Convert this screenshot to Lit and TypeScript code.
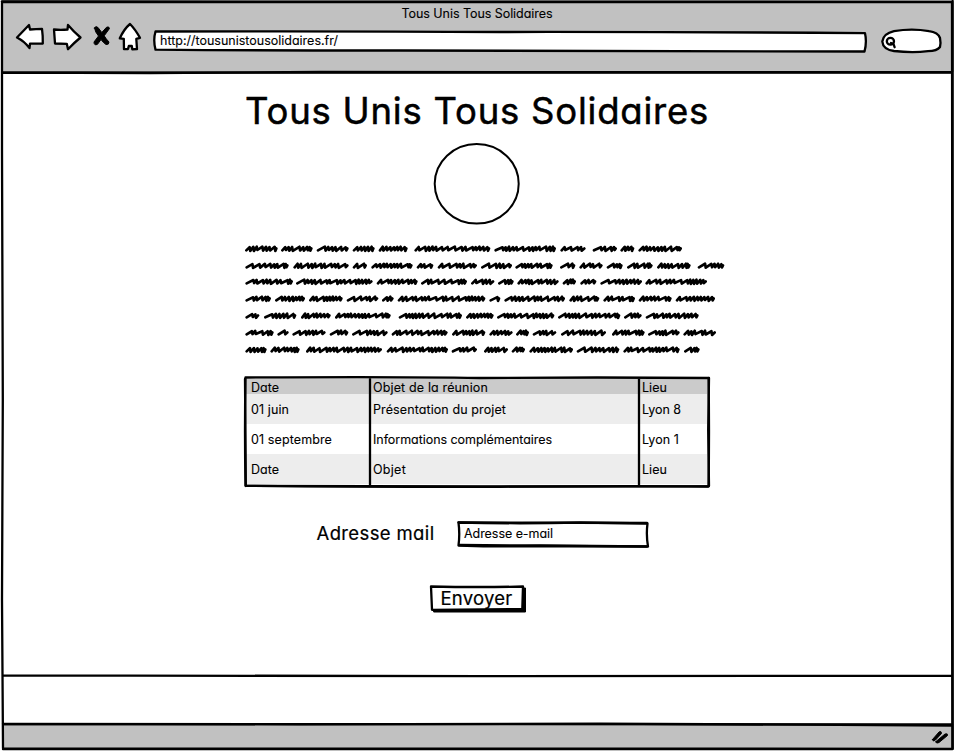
import { LitElement, html, svg, css } from "lit";
import { customElement, property } from "lit/decorators.js";

/** Hand-lettered label whose tracking is adjusted to fill `span` pixels. */
@customElement("sketch-label")
class SketchLabel extends LitElement {
  @property() text = "";
  @property({ type: Number }) span = 100;

  static styles = css`
    :host { display: block; white-space: nowrap; }
    .t { display: inline-block; -webkit-text-stroke: var(--ink, 0.1px) #000; }
  `;

  updated() {
    const el = this.renderRoot.querySelector<HTMLElement>(".t")!;
    el.style.letterSpacing = "0px";
    const natural = el.getBoundingClientRect().width;
    el.style.letterSpacing = `${(this.span - natural) / this.text.length}px`;
  }

  render() {
    return html`<span class="t">${this.text}</span>`;
  }
}

/** Paragraph of scribbled filler. Pairs are word start/end in thirds of a pixel. */
const SCRIBBLES: number[][] = [
  [17,112,125,217,232,325,340,403,418,502,525,750,765,947,963,1036,1060,1130,1143,1182,1197,1325],
  [18,145,162,325,340,380,396,517,532,579,595,710,725,815,828,937,962,1005,1020,1087,1102,1147,1163,1237,1253,1351,1375,1452],
  [18,158,170,397,412,532,545,680,695,762,776,820,834,955,970,1007,1023,1068,1083,1205,1218,1400],
  [18,92,107,194,209,307,322,414,428,460,475,735,750,780,795,974,990,1077,1092,1184,1198,1294,1309,1424],
  [18,57,74,168,185,271,287,451,478,665,680,760,773,942,956,1140,1154,1204,1219,1375],
  [18,100,114,145,159,256,271,324,338,442,457,622,638,735,750,817,830,866,880,948,965,1097,1118,1213,1226,1318,1332,1427],
  [18,79,93,178,200,425,442,623,637,710,734,803,817,854,870,998,1012,1137,1152,1318,1334,1378],
];
const ROW_Y = [41, 92, 140, 191, 242, 293, 344];

function scribble(x0: number, x1: number, y: number, seed: number): string {
  let s = seed * 7919 + 13;
  const rnd = () => ((s = (s * 1103515245 + 12345) & 0x7fffffff) >> 8) % 1000 / 1000;
  let x = x0 + 2;
  let d = `M${x} ${y + 5}`;
  while (x < x1 - 12) {
    const long = rnd() < 0.4;
    const step = long ? 16 + rnd() * 6 : 9 + rnd() * 3;
    const nx = Math.min(x + step, x1 - 7);
    d += `L${(nx - 1).toFixed(1)} ${(y - 4 - rnd() * 2).toFixed(1)}L${(nx + 1).toFixed(1)} ${(y + 4 + rnd() * 3).toFixed(1)}`;
    x = nx;
  }
  return d + `L${x1 - 3} ${y - 0.5}`;
}

const ROWS = [
  { tone: "head", cells: [["Date", 28], ["Objet de la réunion", 115], ["Lieu", 25]] },
  { tone: "odd", cells: [["01 juin", 38], ["Présentation du projet", 133], ["Lyon 8", 39]] },
  { tone: "even", cells: [["01 septembre", 81], ["Informations complémentaires", 179], ["Lyon 1", 37]] },
  { tone: "odd", cells: [["Date", 28], ["Objet", 33], ["Lieu", 25]] },
] as { tone: string; cells: [string, number][] }[];

@customElement("app-root")
class AppRoot extends LitElement {
  static styles = css`
    :host {
      display: block; color: #000;
      font: 12.5px/16px Inter, "Open Sans", sans-serif;
      font-feature-settings: "cv11" 1, "calt" 0;
    }
    .window {
      position: relative; box-sizing: border-box; width: 954px; height: 751px;
      display: grid; grid-template-rows: 72px 603px 49px 26px;
      background: #fff; overflow: hidden;
    }
    .frame { position: absolute; inset: 0; width: 100%; height: 100%; overflow: visible; pointer-events: none; }
    svg { display: block; fill: none; stroke: #000; stroke-width: 2.3; stroke-linejoin: round; stroke-linecap: round; }
    .bar { background: #c1c1c1; margin: 0 2px; }
    .title { display: flex; justify-content: center; padding: 6px 2px 0 0; height: 15px; }
    .tools { display: flex; height: 34px; margin-left: -2px; }
    .nav { flex: 0 0 152px; }
    .address { flex: 0 0 716px; position: relative; box-sizing: border-box; padding: 12px 0 0 8px; }
    .address sketch-label, .input sketch-label, .button sketch-label { position: relative; }
    .search { flex: 0 0 86px; }
    .page { display: flex; flex-direction: column; align-items: center; }
    .heading { font-size: 36.5px; line-height: 46px; height: 46px; margin: 16px 2px 0 0; --ink: 0.5px; }
    .logo { margin: 7px 2px 0 0; }
    .lorem { align-self: flex-start; margin: 10px 0 0 240px; }
    .scrawl { stroke-width: 8; }
    .table { position: relative; align-self: flex-start; width: 465px; height: 111px; margin: 16px 0 0 244px;
      padding: 2px 0; box-sizing: border-box; }
    .row { display: grid; grid-template-columns: 122px 269px 1fr; align-items: center; height: 30px;
      padding: 2px 0 0 6px; margin: 0 2px 0 1px; box-sizing: border-box; }
    .row.head { height: 16px; background: #cbcbcb; }
    .row.odd { background: #ededed; }
    .form { display: flex; align-self: flex-start; align-items: center; margin: 34px 0 0 316.5px; height: 27px; }
    .field { width: 140.5px; font-size: 18.5px; line-height: 24px; height: 27px; --ink: 0.2px; }
    .input { position: relative; width: 192px; height: 27px; box-sizing: border-box; padding: 5px 0 0 7px; }
    .button { position: relative; align-self: flex-start; margin: 37px 0 0 430px; width: 97px; height: 28px;
      box-sizing: border-box; padding: 1px 0 0 10.5px; font-size: 18.5px; line-height: 24px; --ink: 0.2px; }
    .foot { display: flex; justify-content: flex-end; align-items: center; padding-right: 4px; }
  `;

  render() {
    return html`
      <div class="window">
        <header class="bar">
          <div class="title"><sketch-label .text=${"Tous Unis Tous Solidaires"} .span=${151}></sketch-label></div>
          <div class="tools">
            <svg class="nav" width="152" height="34" viewBox="0 21 152 34">
              <g fill="#fff">
                <path d="M17 37.5L29 25L30 29.5Q36 29 42 28.8Q43 36 42.8 43.5L30 43.6L29.5 48Q24 41 17 37.5Z"/>
                <path d="M54 29.5Q61 30.2 67.5 29.5L68 25Q74 32 80.5 37.5Q75 42 68 49.2L66.8 43.8L55 43.5Z"/>
                <path d="M130 24Q135 29 140 37.8L136.3 38.8L137 49L132.3 49.3L131.8 46H128.8L128 49L124 49.2L123.8 38.8L119.8 38.3Q124 29 130 24Z"/>
              </g>
              <path fill="#000" stroke-width="1" d="M94.500 28Q95.500 25.500 98 27.500L101.800 32.500L106.500 27.300Q109 26 109.500 28.500Q107 32 104.200 35.800Q106 39 109 42Q109 45 106 44.500Q103 42.500 101 39.500L97.500 44.300Q94 46 94 42L98.500 36Q95 32 94.500 28Z"/>
            </svg>
            <div class="address">
              <svg class="frame" viewBox="152 21 716 34">
                <path fill="#fff" d="M155.5 31.5Q350 31 500 32Q700 31.8 865 33.2Q867 42 864.5 51.5Q600 51.4 400 50.5Q260 50.6 155.5 49.6Q153 40 155.5 31.5Z"/>
              </svg>
              <sketch-label .text=${"http://tousunistousolidaires.fr/"} .span=${178}></sketch-label>
            </div>
            <svg class="search" width="86" height="34" viewBox="868 21 86 34">
              <path fill="#fff" d="M894 31.2Q912 28.2 929 31.2Q938 32.5 940 38Q941 43 940 47Q937 51 928 51.2Q912 53 894 51Q883 49.500 882.300 41.500Q883.500 33.500 894 31.200Z"/>
              <ellipse cx="890.4" cy="41.3" rx="3.6" ry="3.4"/>
              <path d="M891 43L893.500 44L894.600 47.200"/>
            </svg>
          </div>
        </header>
        <main class="page">
          <sketch-label class="heading" .text=${"Tous Unis Tous Solidaires"} .span=${464}></sketch-label>
          <svg class="logo" width="88" height="84" viewBox="0 0 88 84">
            <ellipse stroke-width="2" cx="43.700" cy="42.800" rx="42" ry="39.800"/>
          </svg>
          <svg class="lorem" width="490" height="125" viewBox="0 0 1470 375">
            ${SCRIBBLES.map((row, r) => svg`<path class="scrawl" d=${row
              .map((v, i) => (i % 2 ? "" : scribble(v, row[i + 1], ROW_Y[r], v + r * 31)))
              .join("")} />`)}
          </svg>
          <div class="table">
            ${ROWS.map((row) => html`<div class="row ${row.tone}">
              ${row.cells.map(([text, span]) => html`<sketch-label .text=${text} .span=${span}></sketch-label>`)}
            </div>`)}
            <svg class="frame" viewBox="244 376 465 111">
              <path d="M245.500 377.500Q400 376.500 480 378Q600 377 708.500 378Q709.500 430 708.500 486.500Q620 485.500 500 486.800Q370 487 245.500 485.800Q244.500 430 245.500 377.500ZM370 378V486M639 378V486"/>
              <path d="M245 379L245.800 486M709 378L708.200 430L709 486M246 485.800L480 486.500L708 486.300"/>
            </svg>
          </div>
          <div class="form">
            <sketch-label class="field" .text=${"Adresse mail"} .span=${118}></sketch-label>
            <div class="input">
              <svg class="frame" viewBox="457 521 192 27">
                <path d="M458.500 522.500Q520 524 580 522.500L647.500 523.500Q646 535 648 546.500Q600 546.500 540 546Q500 547 458.500 545.500Q460 534 458.500 522.500Z"/>
                <path d="M458.500 522.500L647 523M459.500 545L540 545.500L647 546.500"/>
              </svg>
              <sketch-label .text=${"Adresse e-mail"} .span=${89}></sketch-label>
            </div>
          </div>
          <div class="button">
            <svg class="frame" viewBox="430 585 97 28">
              <path fill="#000" stroke-width="1" d="M434 588H525.500V612H434Z"/>
              <path fill="#fff" d="M431 586.500Q480 587.500 523 586.500L522.300 609L432 609.800Z"/>
            </svg>
            <sketch-label .text=${"Envoyer"} .span=${72}></sketch-label>
          </div>
        </main>
        <div></div>
        <footer class="bar foot">
          <svg width="20" height="18" viewBox="930 729 20 18">
            <path fill="#000" stroke-width="1" d="M932.500 740.500L939 733Q941.500 731.500 941.500 734.500L935.500 741Q932.500 743 932.500 740.500ZM936 742.500L945 735Q948 734 947.500 736.500L939 743.500Q935.500 745 936 742.500Z"/>
          </svg>
        </footer>
        <svg class="frame" viewBox="0 0 954 751">
          <path d="M2 2Q400 1.500 952 2.200L952.300 300L951.800 480L952.500 748.800Q400 748.200 3 748.500L2 600L2.800 400L2 150ZM3 72.500L150 73L320 72L952 72.200M3 675.300L480 676.200L952 675.800M3 723.800L300 724.300L600 723.600L952 725.500"/>
          <path d="M1.800 1.500L952 1.800M952.600 1V749M3 749.200H952M3 72.600H952M3 724L952 724.400"/>
        </svg>
      </div>
    `;
  }
}
